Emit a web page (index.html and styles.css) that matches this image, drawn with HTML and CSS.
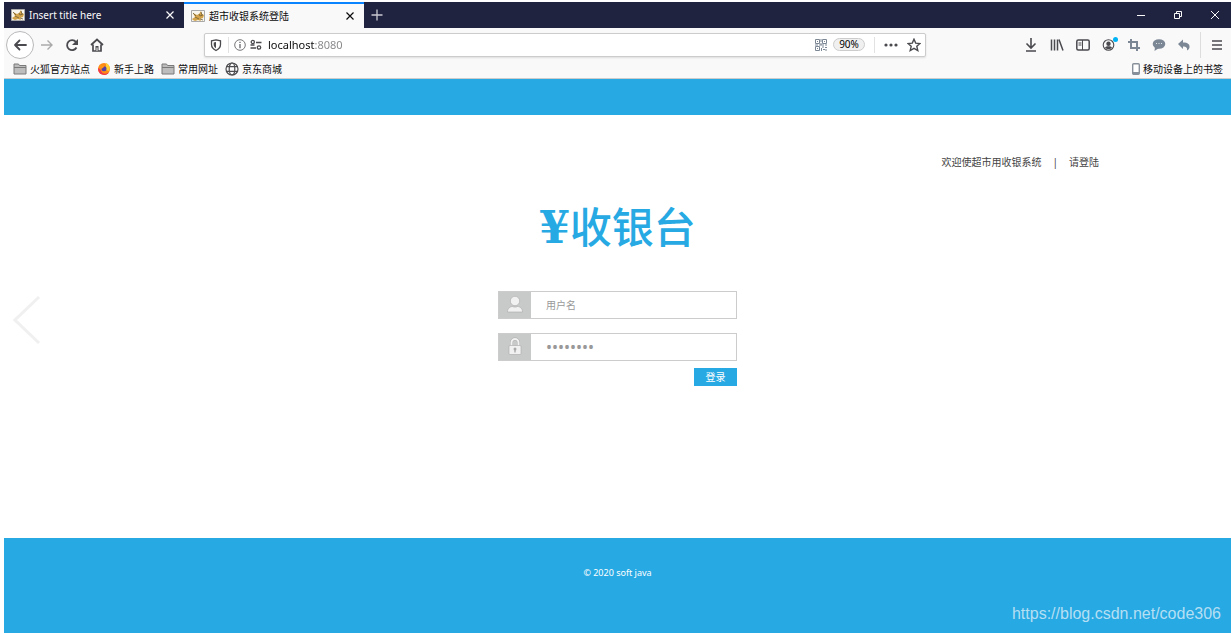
FILE: index.html
```html
<!DOCTYPE html>
<html lang="zh-CN">
<head>
<meta charset="utf-8">
<title>超市收银系统登陆</title>
<link rel="stylesheet" href="styles.css">
</head>
<body>
<svg class="defs" aria-hidden="true">
  <symbol id="cat" viewBox="0 0 14 14"><path d="M.5 1.5h13v11H.5z" fill="#f7f5ee" stroke="#a9a9a9"/><path d="M1 10l3-2-2-4 4 2 2-1 2-3 1 3 2 1-1 3-3 1 1 2-3-1-3 1-2-1z" fill="#d3a34b"/><path d="M2 4l3 3M8 5l1 2 3-1M4 8l4 2M9 10l3 1M10 3l1 3" stroke="#6e5d36" stroke-width=".8" fill="none"/></symbol>
  <symbol id="close" viewBox="0 0 12 12"><path d="M2.500 2.500l7 7M9.500 2.500l-7 7" stroke="currentColor" stroke-width="1.200" fill="none"/></symbol>
  <symbol id="folder" viewBox="0 0 14 12"><path d="M1 11V1h4.500l1 1.500H13V11z" fill="#bdbdbd" stroke="#7a7a7a"/><path d="M1 4.500h12" stroke="#7a7a7a"/></symbol>
</svg>
<header class="browser">
  <div class="tabs">
    <div class="tab"><svg class="fav"><use href="#cat"/></svg><span class="tab-title">Insert title here</span><button class="icon-btn" aria-label="关闭标签页"><svg class="x"><use href="#close"/></svg></button></div>
    <div class="tab active"><svg class="fav"><use href="#cat"/></svg><span class="tab-title">超市收银系统登陆</span><button class="icon-btn" aria-label="关闭标签页"><svg class="x"><use href="#close"/></svg></button></div>
    <button class="icon-btn plus" aria-label="新建标签页"><svg class="i12" viewBox="0 0 12 12"><path d="M6 .5v11M.5 6h11" stroke="currentColor" stroke-width="1.300"/></svg></button>
    <div class="window">
      <button class="icon-btn" aria-label="最小化"><svg class="i10" viewBox="0 0 10 10"><path d="M1 5.500h8" stroke="currentColor"/></svg></button>
      <button class="icon-btn" aria-label="还原"><svg class="i10" viewBox="0 0 10 10"><path d="M1.500 3.500h5v5h-5zM3.500 3V1.500h5v5H7" stroke="currentColor" fill="none"/></svg></button>
      <button class="icon-btn" aria-label="关闭"><svg class="i10" viewBox="0 0 10 10"><path d="M1 1l8 8M9 1l-8 8" stroke="currentColor"/></svg></button>
    </div>
  </div>
  <div class="toolbar">
    <div class="nav">
      <button class="icon-btn back" aria-label="后退"><svg class="i16" viewBox="0 0 16 16"><path d="M14 8H3M7.500 3.500L3 8l4.500 4.500" stroke="currentColor" stroke-width="1.800" stroke-linecap="round" stroke-linejoin="round" fill="none"/></svg></button>
      <button class="icon-btn dim" aria-label="前进"><svg class="i14" viewBox="0 0 14 14"><path d="M1 7h11M7.500 2.500L12 7l-4.500 4.500" stroke="currentColor" stroke-width="1.400" fill="none"/></svg></button>
      <button class="icon-btn" aria-label="刷新"><svg class="i14" viewBox="0 0 14 14"><path d="M11.500 9.500A5 5 0 1 1 11 4" stroke="currentColor" stroke-width="1.800" fill="none"/><path d="M13 1v6H7z" fill="currentColor"/></svg></button>
      <button class="icon-btn" aria-label="主页"><svg class="i14" viewBox="0 0 14 14"><path d="M1 7l6-5.500L13 7M3 6.500V13h8V6.500" stroke="currentColor" stroke-width="1.700" fill="none"/><path d="M5.500 8h3v5h-3z" fill="currentColor"/><path d="M6.500 9.500h1V13h-1z" fill="#f9f9fa"/></svg></button>
    </div>
    <div class="url">
      <svg class="i14" viewBox="0 0 14 14"><path d="M7 1.800l4.500 1v3.700c0 3-2 4.800-4.500 6-2.500-1.200-4.500-3-4.500-6V2.800z" stroke="currentColor" stroke-width="1.300" fill="none"/><path d="M7 4v6.300C5.500 9.300 4.700 8.300 4.700 6.500v-2z" fill="currentColor"/></svg>
      <span class="sep"></span>
      <svg class="i12" viewBox="0 0 12 12"><circle cx="6" cy="6" r="5.300" stroke="#77777a" fill="none"/><path d="M6 5v4.200M6 2.800V4" stroke="#66666a" stroke-width="1.300"/></svg>
      <svg class="i12 perm" viewBox="0 0 12 12"><path d="M6 3.500h5.500M.5 9h5.500M.5 6h4" stroke="currentColor" stroke-width="1.500"/><circle cx="2.800" cy="3" r="1.600" fill="none" stroke="currentColor" stroke-width="1.300"/><circle cx="9" cy="8.500" r="1.700" fill="none" stroke="currentColor" stroke-width="1.300"/></svg>
      <input class="address" type="text" aria-label="地址" value="localhost:8080">
      <svg class="i12" viewBox="0 0 12 12" fill="none" stroke="#7c8795"><path d="M.5.500h4v4h-4zM7.500.500h4v4h-4zM.5 7.500h4v4h-4zM2 2.500h1M9 2.500h1M2 9.500h1M6 0v3M6 4v2M0 6h3M4 6h5M10 6h2M7 8h2M10 8.500h2M6.500 9v3M8 10.500h2M11 10v2"/></svg>
      <button class="zoom">90%</button>
      <span class="sep"></span>
      <button class="icon-btn more" aria-label="更多"><svg class="i14" viewBox="0 0 14 14" fill="currentColor"><circle cx="2" cy="7" r="1.600"/><circle cx="7" cy="7" r="1.600"/><circle cx="12" cy="7" r="1.600"/></svg></button>
      <button class="icon-btn" aria-label="收藏"><svg class="i14" viewBox="0 0 14 14"><path d="M7 1.200l1.700 3.900 4.300.4-3.200 2.800 1 4.200L7 10.300l-3.800 2.200 1-4.200L1 5.500l4.300-.4z" stroke="currentColor" stroke-width="1.400" fill="none"/></svg></button>
    </div>
    <div class="tools">
      <button class="icon-btn" aria-label="下载"><svg class="i14" viewBox="0 0 14 14"><path d="M7 0v10M2.500 5.500L7 10l4.500-4.500M2 13h10" stroke="currentColor" stroke-width="1.600" fill="none"/></svg></button>
      <button class="icon-btn" aria-label="书库"><svg class="i14" viewBox="0 0 14 14"><path d="M1.500 1.500v11M4.500 1.500v11M7.500 1.500v11M9 1.500l4 11" stroke="currentColor" stroke-width="1.500" fill="none"/></svg></button>
      <button class="icon-btn" aria-label="侧栏"><svg class="i14" viewBox="0 0 14 14"><rect x=".8" y="2" width="12.400" height="10" rx="1.500" stroke="currentColor" stroke-width="1.500" fill="none"/><path d="M6.500 2v10M2.500 5h3M2.500 7h3" stroke="currentColor"/></svg></button>
      <button class="icon-btn account" aria-label="账户"><svg class="i14" viewBox="0 0 14 14"><circle cx="6.500" cy="7" r="5.300" stroke="currentColor" stroke-width="1.100" fill="none"/><circle cx="6.500" cy="5.800" r="2.200" fill="currentColor"/><path d="M3 9.500c1-1.800 6-1.800 7 0-1.500 2.300-5.500 2.300-7 0z" fill="currentColor"/></svg><span class="dot"></span></button>
      <button class="icon-btn slate" aria-label="截图"><svg class="i12" viewBox="0 0 12 12"><path d="M3 0v9h9M0 3h9v9" stroke="currentColor" stroke-width="2" fill="none"/></svg></button>
      <button class="icon-btn slate" aria-label="消息"><svg class="i14" viewBox="0 0 14 14"><ellipse cx="7" cy="6" rx="6.300" ry="4.800" fill="currentColor"/><path d="M3 9l-.5 4L7 10z" fill="currentColor"/><path d="M4 5.500h1M6.500 5.500h1M9 5.500h1" stroke="#dfe3e8"/></svg></button>
      <button class="icon-btn slate" aria-label="撤销"><svg class="i12" viewBox="0 0 12 12"><path d="M0 5l5-4.500V3.500c5 0 7 2 6.500 5-.3 1.500-1.500 2.500-2.500 3 .5-3-1-4-4-4v2.500z" fill="currentColor"/></svg></button>
      <span class="tool-sep"></span>
      <button class="icon-btn" aria-label="菜单"><svg class="i12" viewBox="0 0 12 12"><path d="M1 2h10M1 6h10M1 10h10" stroke="currentColor" stroke-width="1.400"/></svg></button>
    </div>
  </div>
  <nav class="bookmarks">
    <a href="#"><svg class="i14"><use href="#folder"/></svg>火狐官方站点</a>
    <a href="#"><svg class="i14" viewBox="-1 -1 14 14"><circle cx="6" cy="6" r="6" fill="#ff8b16"/><path d="M.2 5A6 6 0 0 0 11.500 8.500C9 12 3 11 3 7z" fill="#ef3650"/><path d="M8 0c3 1 5 5 3 8L8 7z" fill="#ffcf35"/><circle cx="6" cy="5.800" r="2.500" fill="#5542a7"/><path d="M1.500 2c2-1 3 .5 5 1L5 5 2.500 6z" fill="#ff9518"/></svg>新手上路</a>
    <a href="#"><svg class="i14"><use href="#folder"/></svg>常用网址</a>
    <a href="#"><svg class="i14" viewBox="0 0 14 14" fill="none" stroke="#4d4d50" stroke-width="1.200"><circle cx="7" cy="7" r="6"/><ellipse cx="7" cy="7" rx="2.800" ry="6"/><path d="M1.500 4.700h11M1.500 9.300h11"/></svg>京东商城</a>
    <a href="#" class="mobile"><svg class="phone" viewBox="0 0 8 12"><rect x=".7" y=".7" width="6.600" height="10.600" rx="1" fill="#fff" stroke="#87909a" stroke-width="1.400"/><path d="M1 10h6" stroke="#87909a" stroke-width="2"/></svg>移动设备上的书签</a>
  </nav>
</header>
<main class="page">
  <div class="band"></div>
  <section class="content">
    <p class="welcome"><span>欢迎使超市用收银系统</span><span>|</span><a href="#">请登陆</a></p>
    <button class="icon-btn prev" aria-label="上一张"><svg class="arrow" viewBox="0 0 28 50"><path d="M26 2L2 25l24 23" stroke="#f0f0f0" stroke-width="3" fill="none"/></svg></button>
    <form class="login">
      <h1 class="logo"><span class="yen">¥</span>收银台</h1>
      <div class="field">
        <label for="user" aria-label="用户名"><svg class="i20" viewBox="0 0 20 20" fill="#f1f1f1" stroke="#aaa" stroke-width=".6"><circle cx="10" cy="6" r="4.700"/><path d="M2.500 17c0-4 3-5.500 5-5.500 1.500.8 3.500.8 5 0 2 0 5 1.500 5 5.500z"/></svg></label>
        <input id="user" type="text" placeholder="用户名">
      </div>
      <div class="field">
        <label for="pass" aria-label="密码"><svg class="i20" viewBox="0 0 20 20"><path d="M6.500 9V5.500a3.500 3.500 0 0 1 7 0V9" fill="none" stroke="#aaa" stroke-width="3"/><path d="M6.500 9V5.500a3.500 3.500 0 0 1 7 0V9" fill="none" stroke="#f1f1f1" stroke-width="2"/><rect x="4" y="8.500" width="12" height="9" rx="1" fill="#f1f1f1" stroke="#aaa" stroke-width=".6"/><circle cx="10" cy="12" r="1.500" fill="#aaa"/><path d="M10 12v3.500" stroke="#aaa" stroke-width="1.400"/></svg></label>
        <input id="pass" type="password" value="password">
      </div>
      <button class="submit" type="button">登录</button>
    </form>
  </section>
  <footer class="footer">
    <p class="copy">© 2020 soft java</p>
    <p class="mark">https://blog.csdn.net/code306</p>
  </footer>
</main>
</body>
</html>
```

FILE: styles.css
```css
* { box-sizing: border-box; }
body { margin: 0; padding: 2px 0 0 4px; min-height: 100vh; display: flex; flex-direction: column; background: #fff; font: 10px/14px "Noto Sans", "Noto Sans CJK SC", sans-serif; color: #0c0c0d; }
svg { display: block; flex: none; }
p, h1 { margin: 0; }
a { color: inherit; text-decoration: none; }
button, input { font: inherit; }
.defs { position: absolute; width: 0; height: 0; }
.i10 { width: 10px; height: 10px; }
.i12 { width: 12px; height: 12px; }
.i14 { width: 14px; height: 14px; }
.i16 { width: 16px; height: 16px; }
.i20 { width: 20px; height: 20px; }
.icon-btn { display: flex; align-items: center; justify-content: center; padding: 0; border: 0; background: none; color: inherit; }
.browser { background: #f9f9fa; border-bottom: 1px solid #ccc; color: #4a4a4f; }
.tabs { display: flex; height: 26px; background: #202340; color: #f9f9fa; }
.tab { display: flex; align-items: center; width: 180px; padding: 0 8px 0 7px; gap: 4px; }
.tab-title { flex: 1; }
.tab.active { background: #f9f9fa; color: #0c0c0d; border-top: 2px solid #0a84ff; }
.fav { width: 14px; height: 14px; }
.x { width: 12px; height: 12px; }
.plus { width: 26px; color: #c9c9d2; }
.window { display: flex; gap: 5px; margin-left: auto; }
.window .icon-btn { width: 32px; }
.toolbar { display: flex; align-items: center; height: 33px; }
.nav { display: flex; align-items: center; gap: 11px; width: 200px; padding-left: 2px; }
.back { width: 28px; height: 28px; border: 1px solid #b9b9bb; border-radius: 50%; background: #fff; }
.nav .icon-btn + .icon-btn { width: 14px; }
.back + .dim { margin-left: -5px; color: #aaa; }
.url { display: flex; align-items: center; flex: 0 1 722px; height: 24px; padding: 0 4px; border: 1px solid #ccc; border-radius: 2px; background: #fff; box-shadow: 0 1px 2px #ddd; }
.sep { width: 1px; height: 16px; margin: 0 5px; background: #e2e2e2; }
.perm { margin-left: 4px; }
.address { flex: 1; min-width: 0; margin-left: 6px; padding: 0; border: 0; outline: 0; font-size: 11px; color: transparent; background: linear-gradient(90deg, #0c0c0d 47px, #858588 47px) text; }
.zoom { width: 32px; height: 13px; margin: 0 4px 0 6px; padding: 0; border: 1px solid #ccc; border-radius: 7px; background: #f0f0f1; line-height: 11px; }
.more { margin: 0 9px 0 4px; }
.tools { display: flex; align-items: center; gap: 12px; margin-left: auto; padding-right: 8px; }
.slate { color: #7c8795; }
.account { position: relative; }
.dot { position: absolute; top: -1px; right: -2px; width: 5px; height: 5px; border-radius: 50%; background: #00b3f4; }
.tool-sep { width: 1px; height: 26px; background: #ddd; margin: 0 -2px; }
.bookmarks { display: flex; align-items: center; gap: 7px; height: 17px; padding: 0 8px 2px 9px; color: #0c0c0d; }
.bookmarks a { display: flex; align-items: center; gap: 3px; }
.bookmarks .mobile { margin-left: auto; }
.phone { width: 8px; height: 12px; }
.page { display: flex; flex-direction: column; flex: 1; }
.band { height: 36px; background: #27a9e3; }
.content { position: relative; flex: 1; padding-top: 40px; }
.welcome { display: flex; justify-content: flex-end; gap: 11px; padding-right: 132px; color: #444; }
.prev { position: absolute; left: 9px; top: 180px; }
.arrow { width: 28px; height: 50px; }
.login { display: flex; flex-direction: column; width: 239px; margin: 8px auto 0; }
.logo { height: 100px; margin-bottom: 14px; text-align: center; white-space: nowrap; color: #27a9e3; font: 500 42px/96px "Noto Sans CJK SC", sans-serif; }
.yen { font: 700 44px/96px "DejaVu Serif", serif; }
.field { display: flex; height: 28px; margin-bottom: 14px; border: 1px solid #ccc; }
.field label { display: flex; align-items: center; justify-content: center; width: 32px; background: #c8c9c9; }
.field input { flex: 1; min-width: 0; padding: 0 15px; border: 0; outline: 0; background: #fff; color: #999; }
.field input::placeholder { color: #999; }
.field input[type="password"] { font-size: 16px; }
.field + .field { margin-bottom: 7px; }
.submit { align-self: flex-end; width: 43px; height: 18px; padding: 0; border: 0; background: #27a9e3; color: #fff; }
.footer { min-height: 95px; padding: 28px 10px 8px; background: #27a9e3; color: #fff; }
.copy { text-align: center; font-size: 9px; }
.mark { margin-top: 24px; text-align: right; color: #b5dff3; font: 16px/20px "Liberation Sans", sans-serif; }
```
